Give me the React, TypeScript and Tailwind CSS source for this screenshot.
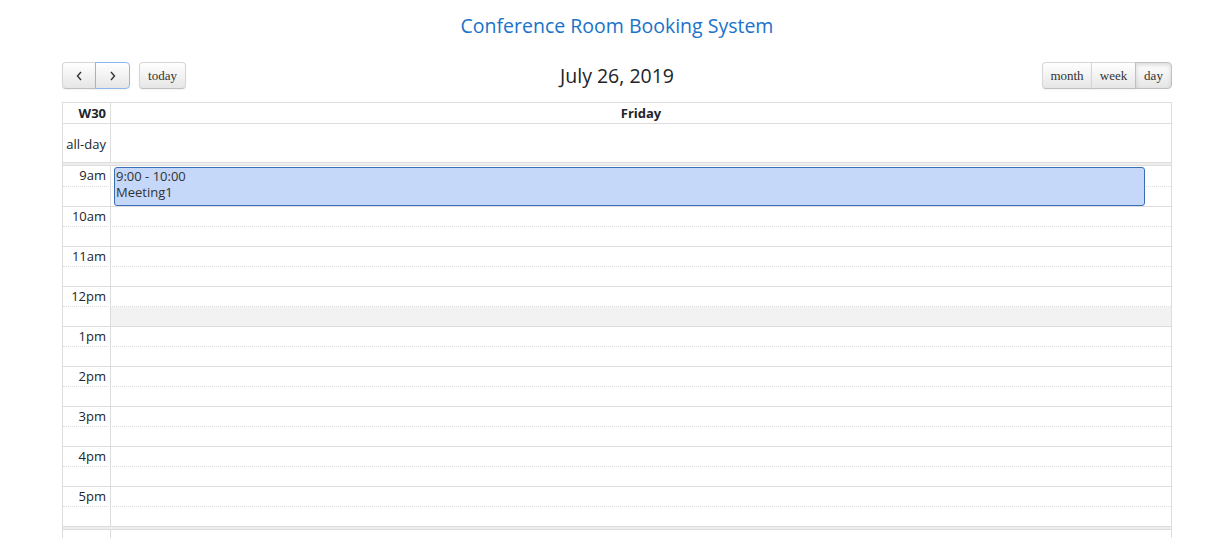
import React from "react";

const hours = ["9am", "10am", "11am", "12pm", "1pm", "2pm", "3pm", "4pm", "5pm"];

const btnBase =
  "h-[27px] border bg-gradient-to-b from-white to-[#e6e6e6] text-[#333] text-[13px] shadow-[0_1px_2px_rgba(0,0,0,0.05)]";
const btn = `${btnBase} border-[#d6d6d6] border-b-[#bfbfbf]`;

function Chevron({ dir }: { dir: "left" | "right" }) {
  return (
    <svg width="7" height="10" viewBox="0 0 7 10" className="mx-auto">
      <path
        d={dir === "left" ? "M5 1 L1.5 5 L5 9" : "M2 1 L5.5 5 L2 9"}
        fill="none"
        stroke="#333"
        strokeWidth="1.4"
      />
    </svg>
  );
}

function HourRow({ label, lunch }: { label: string; lunch?: boolean }) {
  return (
    <>
      <div className="flex h-[20px] border-t border-[#ddd]">
        <div className="w-[48px] shrink-0 border-r border-[#ddd] pr-[4px] text-right text-[13px] leading-[19px]">
          {label}
        </div>
        <div className="flex-1" />
      </div>
      <div className="flex h-[20px] border-t border-dotted border-[#ddd]">
        <div className="w-[48px] shrink-0 border-r border-[#ddd]" />
        <div className={lunch ? "flex-1 bg-[#f2f2f2]" : "flex-1"} />
      </div>
    </>
  );
}

export default function App() {
  return (
    <div
      className="min-h-[538px] bg-white text-[#212529]"
      style={{ fontFamily: "'Open Sans', 'Noto Sans', sans-serif" }}
    >
      <div className="ml-[62px] w-[1110px]">
        <h1 className="pt-[14px] text-center text-[19.5px] font-medium leading-[24px] text-[#1a72c9]">
          Conference Room Booking System
        </h1>

        <div className="mt-[24px] flex items-center justify-between">
          <div className="flex w-[300px] items-center" style={{ fontFamily: "'Liberation Serif', serif" }}>
            <button className={`${btn} w-[34px] rounded-l-[4px]`}>
              <Chevron dir="left" />
            </button>
            <button className={`${btnBase} relative -ml-px w-[35px] rounded-r-[4px] border-[#8fb8ea]`}>
              <Chevron dir="right" />
            </button>
            <button className={`${btn} ml-[9px] w-[47px] rounded-[4px]`}>today</button>
          </div>
          <div className="text-[19.5px] font-medium leading-[24px] text-[#212529]">July 26, 2019</div>
          <div className="flex w-[300px] justify-end" style={{ fontFamily: "'Liberation Serif', serif" }}>
            <button className={`${btn} w-[50px] rounded-l-[4px]`}>month</button>
            <button className={`${btn} -ml-px w-[45px]`}>week</button>
            <button
              className={`${btnBase} -ml-px w-[37px] rounded-r-[4px] border-[#c0c0c0] from-[#c8c8c8] to-[#cccccc] shadow-[inset_0_2px_4px_rgba(0,0,0,0.15)]`}
            >
              day
            </button>
          </div>
        </div>

        <div className="mt-[13px] border-x border-t border-[#ddd]">
          <div className="flex h-[21px] border-b border-[#ddd] text-[13px] font-bold leading-[20px]">
            <div className="w-[48px] shrink-0 border-r border-[#ddd] pr-[4px] text-right">W30</div>
            <div className="flex-1 text-center">Friday</div>
          </div>
          <div className="flex h-[38px]">
            <div className="w-[48px] shrink-0 border-r border-[#ddd] pr-[4px] text-right text-[13px] leading-[40px]">
              all-day
            </div>
            <div className="flex-1" />
          </div>
          <div className="h-[4px] border-y border-[#ddd] bg-[#eee]" />

          <div className="relative">
            <div className="[&>div:first-child]:border-t-0">
              {hours.map((h) => (
                <HourRow key={h} label={h} lunch={h === "12pm"} />
              ))}
            </div>
            <div className="absolute left-[51px] top-[1px] h-[39px] w-[1031px] rounded-[3px] border border-[#3a6fb8] bg-[#c5d8fa] px-[1px] text-[13px] leading-[16px] text-[#333]">
              <div>9:00 - 10:00</div>
              <div>Meeting1</div>
            </div>
          </div>

          <div className="h-[4px] border-y border-[#ddd] bg-[#eee]" />
          <div className="flex h-[30px]">
            <div className="w-[48px] shrink-0 border-r border-[#ddd]" />
            <div className="flex-1" />
          </div>
        </div>
      </div>
    </div>
  );
}
